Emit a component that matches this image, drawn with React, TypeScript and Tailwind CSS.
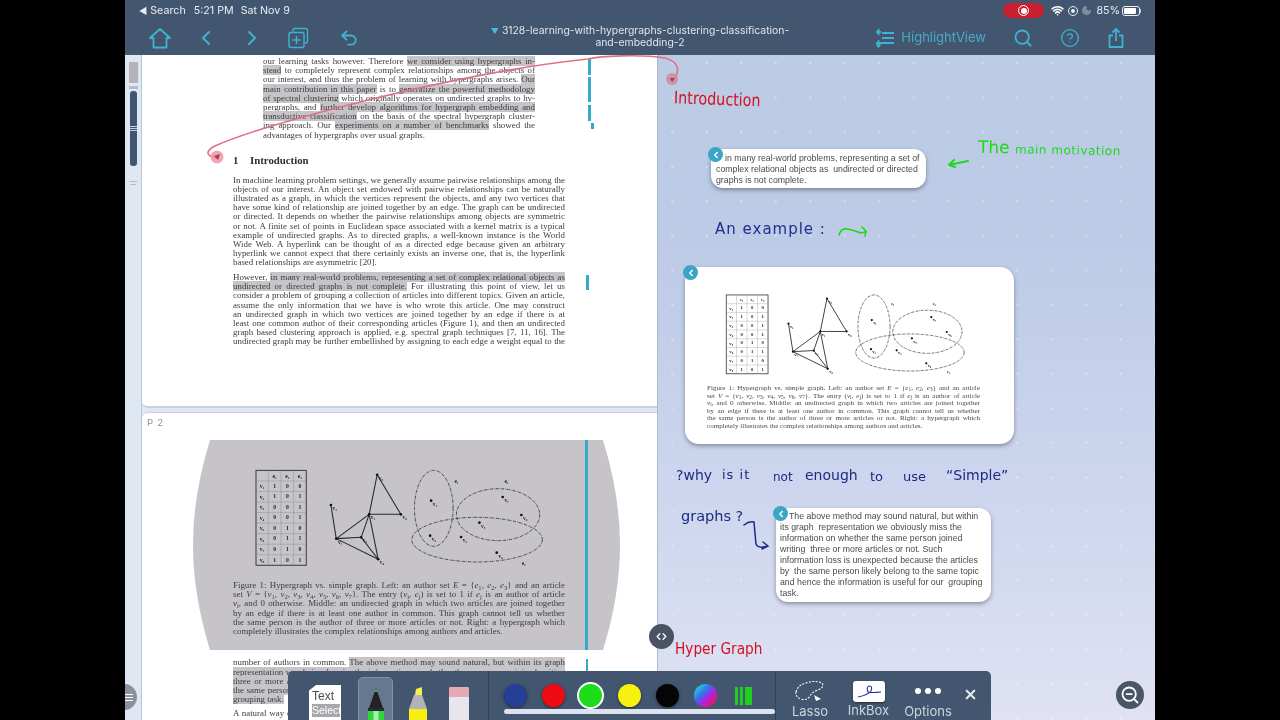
import React from "react";
import { ChevronLeft, ChevronRight, Undo2, Search, CircleHelp, X, ZoomOut, Wifi, Moon, ChevronsLeftRight } from "lucide-react";

const Hl = ({ children }: { children: React.ReactNode }) => <span className="bg-[#c6c4c8]">{children}</span>;

const Line = ({ children, last }: { children: React.ReactNode; last?: boolean }) => (
  <div className={last ? "h-[9.2px] leading-[9.2px] whitespace-nowrap" : "h-[9.2px] leading-[9.2px] whitespace-nowrap text-justify [text-align-last:justify]"}>{children}</div>
);
const CapLine = ({ children, last }: { children: React.ReactNode; last?: boolean }) => (
  <div className={last ? "h-[7.5px] leading-[7.5px] whitespace-nowrap" : "h-[7.5px] leading-[7.5px] whitespace-nowrap text-justify [text-align-last:justify]"}>{children}</div>
);

const abstractLines: [React.ReactNode, boolean?][] = [
  [<>our learning tasks however. Therefore <Hl>we consider using hypergraphs in-</Hl></>],
  [<><Hl>stead</Hl> to completely represent complex relationships among the objects of</>],
  [<>our interest, and thus the problem of learning with hypergraphs arises. <Hl>Our</Hl></>],
  [<><Hl>main contribution in this paper</Hl> is to <Hl>generalize the powerful methodology</Hl></>],
  [<><Hl>of spectral clustering</Hl> which originally operates on undirected graphs to hy-</>],
  [<>pergraphs, and <Hl>further develop algorithms for hypergraph embedding and</Hl></>],
  [<><Hl>transductive classification</Hl> on the basis of the spectral hypergraph cluster-</>],
  [<>ing approach. Our <Hl>experiments on a number of benchmarks</Hl> showed the</>],
  [<>advantages of hypergraphs over usual graphs.</>, true],
];
const para1 = [
  "In machine learning problem settings, we generally assume pairwise relationships among the",
  "objects of our interest. An object set endowed with pairwise relationships can be naturally",
  "illustrated as a graph, in which the vertices represent the objects, and any two vertices that",
  "have some kind of relationship are joined together by an edge. The graph can be undirected",
  "or directed. It depends on whether the pairwise relationships among objects are symmetric",
  "or not. A finite set of points in Euclidean space associated with a kernel matrix is a typical",
  "example of undirected graphs. As to directed graphs, a well-known instance is the World",
  "Wide Web. A hyperlink can be thought of as a directed edge because given an arbitrary",
  "hyperlink we cannot expect that there certainly exists an inverse one, that is, the hyperlink",
];
const para2: React.ReactNode[] = [
  <>However, <Hl>in many real-world problems, representing a set of complex relational objects as</Hl></>,
  <><Hl>undirected or directed graphs is not complete.</Hl> For illustrating this point of view, let us</>,
  "consider a problem of grouping a collection of articles into different topics. Given an article,",
  "assume the only information that we have is who wrote this article. One may construct",
  "an undirected graph in which two vertices are joined together by an edge if there is at",
  "least one common author of their corresponding articles (Figure 1), and then an undirected",
  "graph based clustering approach is applied, e.g. spectral graph techniques [7, 11, 16]. The",
  "undirected graph may be further embellished by assigning to each edge a weight equal to the",
];
const caption: React.ReactNode[] = [
  <>Figure 1: Hypergraph vs. simple graph. Left: an author set <i>E</i> = {"{"}<i>e</i><sub>1</sub>, <i>e</i><sub>2</sub>, <i>e</i><sub>3</sub>{"}"} and an article</>,
  <>set <i>V</i> = {"{"}<i>v</i><sub>1</sub>, <i>v</i><sub>2</sub>, <i>v</i><sub>3</sub>, <i>v</i><sub>4</sub>, <i>v</i><sub>5</sub>, <i>v</i><sub>6</sub>, <i>v</i><sub>7</sub>{"}"}. The entry (<i>v</i><sub>i</sub>, <i>e</i><sub>j</sub>) is set to 1 if <i>e</i><sub>j</sub> is an author of article</>,
  <><i>v</i><sub>i</sub>, and 0 otherwise. Middle: an undirected graph in which two articles are joined together</>,
  "by an edge if there is at least one author in common. This graph cannot tell us whether",
  "the same person is the author of three or more articles or not. Right: a hypergraph which",
];
const captionLast = "completely illustrates the complex relationships among authors and articles.";

const tableRows = [[1,0,0],[1,0,1],[0,0,1],[0,0,1],[0,1,0],[0,1,1],[0,1,0],[1,0,1]];
const graphEdges = [[563,135,634,254],[563,135,539,254],[539,254,634,254],[424,226,440,327],[440,327,539,254],[440,327,515,323],[440,327,566,389],[539,254,515,323],[539,254,566,389],[515,323,566,389]];
const graphPts = [[563,135,"v₅"],[634,254,"v₆"],[539,254,"v₁"],[424,226,"v₃"],[440,327,"v₇"],[515,323,"v₂"],[566,389,"v₄"]] as [number,number,string][];
const hyperPts = [[725,213,"v₁"],[722,318,"v₂"],[815,322,"v₃"],[870,279,"v₅"],[940,202,"v₇"],[996,256,"v₆"],[922,369,"v₄"]] as [number,number,string][];

const Figure = ({ className }: { className: string }) => (
  <svg viewBox="190 115 880 300" className={className}>
    <g stroke="#3a3a3a" fill="none">
      <rect x="199" y="122" width="151" height="285" strokeWidth="3" />
      {[1,2,3,4,5,6,7,8].map(i => <line key={i} x1="199" x2="350" y1={122+i*31.67} y2={122+i*31.67} strokeWidth="1" stroke="#7a7a7a" />)}
      {[236,274,312].map(x => <line key={x} x1={x} x2={x} y1="122" y2="407" strokeWidth="1" stroke="#7a7a7a" />)}
    </g>
    <g fontFamily="'Liberation Serif',serif" fontSize="17" fill="#222" textAnchor="middle">
      {["e₁","e₂","e₃"].map((e,i) => <text key={e} x={255+i*38} y="144" fontWeight="700">{e}</text>)}
      {tableRows.map((r,i) => (
        <g key={i}>
          <text x="217" y={175+i*31.67} fontWeight="700">{`v${"₁₂₃₄₅₆₇₈"[i]}`}</text>
          {r.map((v,j) => <text key={j} x={255+j*38} y={174+i*31.67} fontWeight="700">{v}</text>)}
        </g>
      ))}
    </g>
    <g stroke="#2a2a2a" strokeWidth="3.2">
      {graphEdges.map((e,i) => <line key={i} x1={e[0]} y1={e[1]} x2={e[2]} y2={e[3]} />)}
    </g>
    <g fontFamily="'Liberation Serif',serif" fontSize="16" fontWeight="700" fill="#222">
      {graphPts.map((p,i) => <g key={i}><circle cx={p[0]} cy={p[1]} r="4" fill="#111" /><text x={p[0]+5} y={p[1]+15}>{p[2]}</text></g>)}
      {hyperPts.map((p,i) => <g key={i}><circle cx={p[0]} cy={p[1]} r="4" fill="#111" /><text x={p[0]+5} y={p[1]+15}>{p[2]}</text></g>)}
      <text x="795" y="160">e₁</text>
      <text x="945" y="160">e₃</text>
      <text x="997" y="405">e₂</text>
    </g>
    <g fill="none" stroke="#333" strokeWidth="2.6" strokeDasharray="9 3 2 3">
      <ellipse cx="733" cy="236" rx="58" ry="114" />
      <ellipse cx="926" cy="255" rx="125" ry="78" />
      <ellipse cx="863" cy="330" rx="196" ry="67" />
    </g>
  </svg>
);

const BackDot = ({ className }: { className: string }) => (
  <div className={`absolute w-[15px] h-[15px] rounded-full bg-[#3aa5c6] flex items-center justify-center ${className}`}>
    <ChevronLeft size={10} strokeWidth={3.5} color="white" />
  </div>
);

const Ink = ({ className, children }: { className: string; children: React.ReactNode }) => (
  <span className={`absolute whitespace-nowrap font-['DejaVu_Sans',sans-serif] ${className}`}>{children}</span>
);

const IconBlue = "#3fb2d2";

export default function App() {
  return (
    <div className="w-[1280px] h-[720px] bg-black flex justify-center overflow-hidden font-['Inter',sans-serif]">
      <div className="relative w-[1030px] h-[720px] flex flex-col overflow-hidden blur-[0.35px]">
        {/* header */}
        <header className="h-[55px] shrink-0 bg-[#43566f] flex flex-col">
          <div className="h-[20px] pt-[2px] flex items-center justify-between pl-[14px] pr-[14px] text-[10.7px] text-[#e8ecf1]">
            <div className="flex items-center">
              <span className="text-[9px] mr-[3px]">◀</span>
              <span>Search</span>
              <span className="ml-[8px]">5:21 PM</span>
              <span className="ml-[7px]">Sat Nov 9</span>
            </div>
            <div className="flex items-center">
              <div className="w-[41px] h-[15px] rounded-full bg-[#c8202e] flex items-center justify-center">
                <div className="w-[11px] h-[11px] rounded-full border-[1.5px] border-white flex items-center justify-center">
                  <div className="w-[6px] h-[6px] rounded-full bg-white" />
                </div>
              </div>
              <Wifi size={13} strokeWidth={3} className="ml-[7px] text-white" />
              <div className="ml-[4px] w-[10px] h-[10px] rounded-full border-[1.5px] border-[#e8ecf1] flex items-center justify-center">
                <div className="w-[4px] h-[4px] rounded-full bg-[#e8ecf1]" />
              </div>
              <Moon size={11} className="ml-[3px] text-[#7f8da0] fill-[#7f8da0]" />
              <span className="ml-[4px]">85%</span>
              <div className="ml-[2px] w-[18px] h-[10px] rounded-[3px] border border-[#e8ecf1] p-px flex">
                <div className="w-[85%] bg-white rounded-[1px]" />
              </div>
              <div className="w-[1px] h-[4px] bg-[#b8c2cf]" />
            </div>
          </div>
          <div className="flex-1 grid grid-cols-[1fr_auto_1fr] items-center">
            <div className="flex items-center pl-[23px] gap-[22px]">
              <svg width="24" height="24" viewBox="0 0 24 24" fill="none" stroke={IconBlue} strokeWidth="1.8" strokeLinejoin="round">
                <path d="M2 12 L12 3 L22 12 L18.5 12 L18.5 21.5 L5.5 21.5 L5.5 12 Z" />
              </svg>
              <ChevronLeft size={24} color={IconBlue} strokeWidth={2} />
              <ChevronRight size={24} color={IconBlue} strokeWidth={2} />
              <svg width="24" height="24" viewBox="0 0 24 24" fill="none" stroke={IconBlue} strokeWidth="1.4">
                <rect x="3" y="6.5" width="15" height="15" rx="2" />
                <path d="M7 6 V4.5 A2 2 0 0 1 9 2.5 H19.5 A2 2 0 0 1 21.5 4.5 V15 A2 2 0 0 1 19.5 17 H18.5" />
                <path d="M10.5 10 V18 M6.5 14 H14.5" />
              </svg>
              <Undo2 size={20} color={IconBlue} strokeWidth={2.2} className="ml-[7px]" />
            </div>
            <div className="text-[10.4px] leading-[12px] text-[#dfe5ec] text-center -mt-[2px]">
              <div><span className="text-[#4fb8d8] text-[8px] mr-[3px]">▼</span>3128-learning-with-hypergraphs-clustering-classification-</div>
              <div>and-embedding-2</div>
            </div>
            <div className="flex items-center justify-end pr-[30px] pt-[1px]">
              <svg width="20" height="20" viewBox="0 0 20 20" fill="none" stroke={IconBlue} strokeWidth="2">
                <path d="M7 5 H19 M7 10 H19 M1 15 H19 M3.5 1 V7 M1 4 H6" />
                <path d="M3.5 12 V19 M1.5 16.5 L3.5 19 L5.5 16.5" strokeWidth="1.5" />
              </svg>
              <span className="ml-[6px] text-[13px] text-[#4aa9c8]">HighlightView</span>
              <Search size={20} color={IconBlue} strokeWidth={2.2} className="ml-[27px]" />
              <CircleHelp size={20} color={IconBlue} strokeWidth={1.6} className="ml-[27px]" />
              <svg width="18" height="20" viewBox="0 0 18 20" fill="none" stroke={IconBlue} strokeWidth="1.8" className="ml-[27px]">
                <path d="M9 13 V1.5 M5.5 4.5 L9 1 L12.5 4.5 M6 7.5 H2.5 V19 H15.5 V7.5 H12" />
              </svg>
            </div>
          </div>
        </header>

        {/* body */}
        <div className="flex-1 min-h-0 flex">
          {/* pdf pane */}
          <div className="relative w-[533px] shrink-0 flex bg-[#dfe7f3] overflow-hidden border-r border-[#aeb9cf]">
            <div className="relative w-[17px] shrink-0 flex flex-col items-center border-r border-[#b9c5da] pt-[7px]">
              <div className="w-[9px] h-[21px] bg-[#b5b3b7]" />
              <div className="w-[9px] h-[3px] mt-[3px] bg-[#b9bcc4]" />
              <div className="w-[7px] h-[75px] mt-[2px] rounded-[3px] bg-[#3f5673] flex flex-col justify-center gap-px">
                <div className="h-px bg-[#c3ccd9]" />
                <div className="h-px bg-[#c3ccd9]" />
                <div className="h-px bg-[#c3ccd9]" />
              </div>
              <div className="w-[8px] h-[1px] mt-[15px] bg-[#b4b9c3]" />
              <div className="w-[6px] h-[1px] mt-[2px] bg-[#b4b9c3]" />
            </div>
            <div className="flex-1 flex flex-col font-['Liberation_Serif',serif] text-[8.9px] text-[#3c3c3c]">
              {/* page 1 */}
              <div className="relative h-[353px] shrink-0 bg-white rounded-bl-[6px] border-b-2 border-[#c6d0e3]">
                <div className="pl-[121px] w-[393px] pt-[2px]">
                  {abstractLines.map((l, i) => <Line key={i} last={l[1]}>{l[0]}</Line>)}
                </div>
                <div className="pl-[91px] w-[423px] mt-[14.4px] h-[12px] leading-[12px] text-[10.8px] font-bold flex text-[#2f2f2f]">
                  <span className="w-[17px]">1</span><span>Introduction</span>
                </div>
                <div className="pl-[91px] w-[423px] mt-[9.6px]">
                  {para1.map((l, i) => <Line key={i}>{l}</Line>)}
                  <Line last>based relationships are asymmetric [20].</Line>
                </div>
                <div className="pl-[91px] w-[423px] mt-[5.4px]">
                  {para2.map((l, i) => <Line key={i}>{l}</Line>)}
                </div>
                <div className="absolute left-[446px] top-[3px] w-[3px] h-[17px] bg-[#37aacb]" />
                <div className="absolute left-[446px] top-[22px] w-[3px] h-[25px] bg-[#37aacb]" />
                <div className="absolute left-[446px] top-[50px] w-[3px] h-[16px] bg-[#37aacb]" />
                <div className="absolute left-[449px] top-[68px] w-[3px] h-[6px] bg-[#37aacb]" />
                <div className="absolute left-[444px] top-[220px] w-[3px] h-[15px] bg-[#37aacb]" />
              </div>
              {/* page 2 */}
              <div className="relative flex-1 mt-[4px] bg-white rounded-tl-[6px] overflow-hidden border-t border-[#c6d0e3]">
                <div className="h-[27px] pl-[5px] pt-[3px] font-['Inter',sans-serif] text-[9.5px] text-[#8a8f99] tracking-[0.8px]">P 2</div>
                <div className="relative h-[210px]">
                  <svg viewBox="0 0 427 210" preserveAspectRatio="none" className="absolute left-[51px] top-0 w-[427px] h-[210px]">
                    <path d="M17 0 H410 Q427 55 427 105 Q427 155 410 210 H17 Q0 155 0 105 Q0 55 17 0 Z" fill="#c6c4c8" />
                  </svg>
                  <div className="absolute left-[443px] top-0 w-[3px] h-[210px] bg-[#37aacb]" />
                  <div className="relative pl-[111px] pt-[28px]">
                    <Figure className="w-[293px] h-[100px]" />
                  </div>
                  <div className="relative pl-[91px] w-[423px] mt-[13px]">
                    {caption.map((l, i) => <Line key={i}>{l}</Line>)}
                    <Line last>{captionLast}</Line>
                  </div>
                </div>
                <div className="absolute left-[444px] top-[246px] w-[2px] h-[40px] bg-[#37aacb]" />
                <div className="pl-[91px] w-[423px] mt-[8.4px]">
                  <Line>number of authors in common. <Hl>The above method may sound natural, but within its graph</Hl></Line>
                  <Line><Hl>representation we obviously miss the information on whether the same person joined writing</Hl></Line>
                  <Line><Hl>three or more articles or not. Such information loss is unexpected because the articles by</Hl></Line>
                  <Line><Hl>the same person likely belong to the same topic and hence the information is useful for our</Hl></Line>
                  <Line last><Hl>grouping task.</Hl></Line>
                  <div className="mt-[5px]"><Line>A natural way of remedying the information loss issue occurring in the above methodology</Line></div>
                </div>
              </div>
            </div>
          </div>

          {/* notes canvas */}
          <div className="relative flex-1 [background:radial-gradient(circle,#ffffff70_0.8px,transparent_1.4px)_-3px_-9px/34.5px_34.5px,linear-gradient(180deg,#bbcce4_0%,#bdcbe6_28%,#c6d1eb_50%,#d3daf0_78%,#e0e2f4_100%)]">
            <Ink className="left-[16px] top-[34px] text-[14.3px] text-[#d4101f] rotate-[2deg] scale-y-[1.2]">Introduction</Ink>
            <Ink className="left-[320px] top-[81px] text-[17px] text-[#1ed81e] rotate-[1deg]">The <span className="text-[12px] tracking-[0.5px]">main motivation</span></Ink>
            <svg className="absolute left-[290px] top-[101px]" width="22" height="12" viewBox="0 0 22 12" fill="none" stroke="#1ed81e" strokeWidth="2" strokeLinecap="round">
              <path d="M20 5 Q10 7 1 9 M6 4 L1 9 L7 11" />
            </svg>
            <Ink className="left-[57px] top-[163px] text-[15px] text-[#1f2f8f] tracking-[1px]">An example :</Ink>
            <svg className="absolute left-[180px] top-[171px]" width="29" height="11" viewBox="0 0 29 11" fill="none" stroke="#1ed81e" strokeWidth="1.6" strokeLinecap="round">
              <path d="M1 9 Q3 2 9 3 T20 6 T28 5 M24 1 L28 5 L27 10" />
            </svg>

            {/* note 1 */}
            <div className="absolute left-[53px] top-[94px] w-[215px] h-[39px] rounded-[12px] bg-white shadow-[0_2px_4px_rgba(60,70,90,0.55)] pl-[5px] pt-[4px] font-['Liberation_Sans',sans-serif] text-[8.75px] leading-[11px] text-[#4a4a4a] whitespace-pre">
              <div className="pl-[9px]">in many real-world problems, representing a set of</div>
              <div>complex relational objects as  undirected or directed</div>
              <div>graphs is not complete.</div>
            </div>
            <BackDot className="left-[50px] top-[92px]" />

            {/* figure card */}
            <div className="absolute left-[27px] top-[212px] w-[329px] h-[177px] rounded-[14px] bg-white shadow-[0_2px_4px_rgba(60,70,90,0.5)] flex flex-col">
              <div className="pl-[38px] pt-[26px]"><Figure className="w-[245px] h-[83px]" /></div>
              <div className="pl-[22px] w-[295px] mt-[9px] font-['Liberation_Serif',serif] text-[7.1px] text-[#4a4a4a]">
                {caption.map((l, i) => <CapLine key={i}>{l}</CapLine>)}
                <CapLine last>{captionLast}</CapLine>
              </div>
            </div>
            <BackDot className="left-[25px] top-[210px]" />

            {/* why */}
            <Ink className="left-[18px] top-[410px] text-[14px] text-[#1c2a85]">?why</Ink>
            <Ink className="left-[64px] top-[410px] text-[13px] text-[#1c2a85] tracking-[1px]">is it</Ink>
            <Ink className="left-[115px] top-[413px] text-[12px] text-[#1c2a85]">not</Ink>
            <Ink className="left-[147px] top-[410px] text-[14px] text-[#1c2a85]">enough</Ink>
            <Ink className="left-[212px] top-[412px] text-[13px] text-[#1c2a85]">to</Ink>
            <Ink className="left-[245px] top-[412px] text-[13px] text-[#1c2a85]">use</Ink>
            <Ink className="left-[288px] top-[410px] text-[14px] text-[#1c2a85]">“Simple”</Ink>
            <Ink className="left-[23px] top-[451px] text-[14.5px] text-[#1c2a85]">graphs ?</Ink>
            <svg className="absolute left-[85px] top-[465px]" width="28" height="32" viewBox="0 0 28 32" fill="none" stroke="#1c2a85" strokeWidth="1.5" strokeLinecap="round">
              <path d="M1 5 Q6 1 11 2 Q12 14 13 24 Q15 29 25 26 M20 22 L25 26 L19 29" />
            </svg>

            {/* note 2 */}
            <div className="absolute left-[118px] top-[453px] w-[215px] h-[94px] rounded-[12px] bg-white shadow-[0_2px_4px_rgba(60,70,90,0.5)] pl-[4px] pt-[3px] font-['Liberation_Sans',sans-serif] text-[8.75px] leading-[11px] text-[#4a4a4a] whitespace-pre">
              <div className="pl-[9px]">The above method may sound natural, but within</div>
              <div>its graph  representation we obviously miss the</div>
              <div>information on whether the same person joined</div>
              <div>writing  three or more articles or not. Such</div>
              <div>information loss is unexpected because the articles</div>
              <div>by  the same person likely belong to the same topic</div>
              <div>and hence the information is useful for our  grouping</div>
              <div>task.</div>
            </div>
            <BackDot className="left-[115px] top-[451px]" />

            <Ink className="left-[17px] top-[583px] text-[13.7px] text-[#d4101f] scale-y-[1.15]">Hyper Graph</Ink>
          </div>
        </div>

        {/* pink link across the panes */}
        <svg viewBox="125 0 1030 720" className="absolute inset-0 w-[1030px] h-[720px] pointer-events-none">
          <path d="M673 80 C680 72 680 62 665 58 C640 54 600 56 588 59 C520 66 450 80 368 100 C320 112 250 130 215 146 C205 151 206 156 216 158" fill="none" stroke="#e0708a" strokeWidth="1.6" />
          <circle cx="217" cy="157" r="6.5" fill="#f09aa8" fillOpacity="0.9" />
          <path d="M214 156 L220 154 L218 160 Z" fill="#a83a50" />
          <circle cx="672" cy="79" r="6" fill="#cf8aa0" fillOpacity="0.85" />
          <path d="M670 78 L675 78 L672 82 Z" fill="#a83a50" />
        </svg>

        {/* page list handle */}
        <div className="absolute left-[-14px] top-[684px] w-[26px] h-[26px] rounded-full bg-[#8d919f] flex items-center justify-end pr-[4px]">
          <div className="flex flex-col gap-[2px]">
            <div className="w-[8px] h-px bg-white" />
            <div className="w-[8px] h-px bg-white" />
            <div className="w-[8px] h-px bg-white" />
          </div>
        </div>

        {/* divider handle */}
        <div className="absolute left-[524px] top-[624px] w-[25px] h-[25px] rounded-full bg-[#4a5364] flex items-center justify-center">
          <ChevronsLeftRight size={13} color="white" strokeWidth={2.4} />
        </div>

        {/* toolbar */}
        <div className="absolute left-[163px] top-[671px] w-[703px] h-[49px] bg-[#43566f] rounded-t-[5px] flex overflow-hidden">
          <div className="w-[201px] shrink-0 border-r border-[#33445a] flex items-start pt-[6px]">
            <div className="ml-[21px] mt-[8px] w-[32px] h-[40px] bg-white [clip-path:polygon(22%_0,100%_0,100%_100%,0_100%,0_14%)] text-[12px] leading-[13px] text-[#4a4a4a] font-['Liberation_Sans',sans-serif] pl-[3px] pt-[5px]">
              Text
              <div className="mt-[1px] bg-[#a8a8ac] text-white w-[28px] text-[10.5px] leading-[13px] whitespace-nowrap">Select</div>
            </div>
            <div className="ml-[17px] w-[35px] h-[50px] rounded-t-[5px] border border-[#8091a8] bg-[#66788f] flex justify-center pt-[9px]">
              <svg width="20" height="42" viewBox="0 0 20 42">
                <path d="M10 1 L3 21 H17 Z" fill="#222" />
                <path d="M10 1 L8.6 5 H11.4 Z" fill="#5aa67a" />
                <rect x="2" y="21" width="16" height="3" fill="#2b2b33" />
                <rect x="2" y="24" width="16" height="18" fill="#2fd83a" />
                <rect x="7.5" y="24" width="5" height="18" fill="#a8f0ae" />
              </svg>
            </div>
            <svg className="ml-[14px] mt-[10px]" width="22" height="42" viewBox="0 0 22 42">
              <path d="M9 2 L15 0 V8 H8 Z" fill="#f4f04a" />
              <path d="M7 8 H15 L20 22 H2 Z" fill="#b3b4b8" />
              <rect x="2" y="22" width="18" height="20" fill="#f5f00f" />
            </svg>
            <div className="ml-[20px] mt-[10px] w-[20px] h-[40px] rounded-t-[2px] bg-[#e8e6ec] flex flex-col">
              <div className="h-[10px] bg-[#e4a9b3] rounded-t-[2px]" />
            </div>
          </div>
          <div className="relative w-[287px] shrink-0 border-r border-[#33445a] flex items-center pl-[15px]">
            <div className="w-[23px] h-[23px] rounded-full bg-[#233f96] shadow-[0_1px_3px_rgba(0,0,0,0.5)]" />
            <div className="ml-[15px] w-[23px] h-[23px] rounded-full bg-[#ee0a12] shadow-[0_1px_3px_rgba(0,0,0,0.5)]" />
            <div className="ml-[12px] w-[27px] h-[27px] rounded-full bg-[#1cdc1c] border-2 border-white" />
            <div className="ml-[14px] w-[23px] h-[23px] rounded-full bg-[#f8f00e] shadow-[0_1px_3px_rgba(0,0,0,0.5)]" />
            <div className="ml-[15px] w-[23px] h-[23px] rounded-full bg-[#050508] shadow-[0_1px_3px_rgba(0,0,0,0.5)]" />
            <div className="ml-[15px] w-[23px] h-[23px] rounded-full bg-[linear-gradient(135deg,#1fd6d8_10%,#3a6df0_40%,#b020e0_60%,#f0184a_90%)]" />
            <div className="ml-[18px] flex gap-[2px] h-[18px]">
              <div className="w-[3px] bg-[#1fd01f]" />
              <div className="w-[3px] bg-[#1fd01f]" />
              <div className="w-[7px] bg-[#1fd01f]" />
            </div>
            <div className="absolute left-[15px] right-0 top-[38px] h-[5px] rounded-full bg-[#dde3ee]" />
          </div>
          <div className="flex-1 relative flex pt-[9px] text-[13px] text-[#ccd4df]">
            <div className="w-[68px] flex flex-col items-center">
              <svg width="32" height="22" viewBox="0 0 32 22" fill="none" stroke="white" strokeWidth="1.1" strokeDasharray="2 1.4">
                <path d="M2 12 Q4 5 12 3 Q20 0 28 3 Q31 7 24 10 Q18 12 16 16 Q13 21 7 19 Q1 17 2 12 Z" />
                <path d="M20 15 L27 19 L22 21 Z" fill="white" stroke="none" />
              </svg>
              <span className="mt-[1px] leading-[16px]">Lasso</span>
            </div>
            <div className="w-[49px] flex flex-col items-center">
              <div className="mt-[1px] w-[32px] h-[21px] rounded-[3px] bg-white flex items-center justify-center shadow-[0_1px_2px_rgba(0,0,0,0.5)]">
                <svg width="26" height="15" viewBox="0 0 26 15" fill="none" stroke="#2a2fa0" strokeWidth="1.1">
                  <path d="M2 13 Q12 11 15 7 Q17 2 13 2 Q10 3 12 8 Q16 9 25 8" />
                </svg>
              </div>
              <span className="leading-[16px]">InkBox</span>
            </div>
            <div className="w-[70px] flex flex-col items-center">
              <div className="h-[22px] flex items-center gap-[4px]">
                <div className="w-[6px] h-[6px] rounded-full bg-white" />
                <div className="w-[6px] h-[6px] rounded-full bg-white" />
                <div className="w-[6px] h-[6px] rounded-full bg-white" />
              </div>
              <span className="mt-[1px] leading-[16px]">Options</span>
            </div>
            <X size={15} strokeWidth={3.4} color="#e3e8ef" className="mt-[7px]" />
          </div>
        </div>

        {/* zoom out */}
        <div className="absolute left-[991px] top-[681px] w-[28px] h-[28px] rounded-full bg-[#4a5565] flex items-center justify-center">
          <ZoomOut size={20} color="white" strokeWidth={2.2} />
        </div>
      </div>
    </div>
  );
}
